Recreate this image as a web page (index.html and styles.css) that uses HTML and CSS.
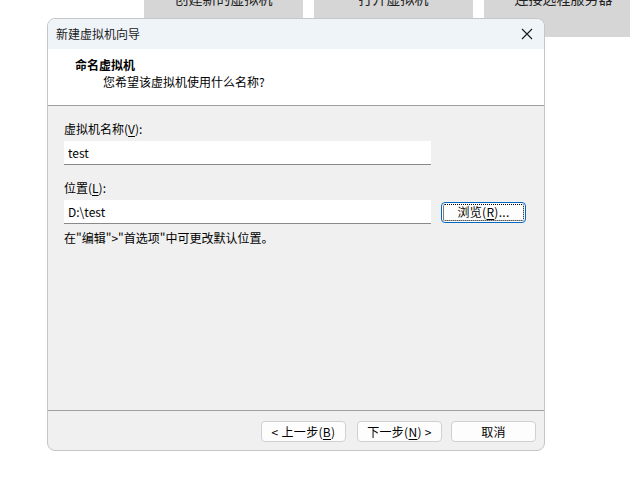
FILE: index.html
```html
<!DOCTYPE html>
<html lang="zh-CN">
<head>
<meta charset="utf-8">
<title>新建虚拟机向导</title>
<link rel="stylesheet" href="styles.css">
</head>
<body>
<div class="desktop">
  <div class="tiles">
    <div class="tile"><span>创建新的虚拟机</span></div>
    <div class="tile"><span>打开虚拟机</span></div>
    <div class="tile"><span>连接远程服务器</span></div>
  </div>

  <div class="dialog">
    <div class="titlebar">
      <span class="title">新建虚拟机向导</span>
      <svg class="close" width="12" height="12" viewBox="0 0 12 12"><path d="M1 1 L11 11 M11 1 L1 11" stroke="#1a1a1a" stroke-width="1.1" fill="none"/></svg>
    </div>
    <div class="header">
      <div class="h-title">命名虚拟机</div>
      <div class="h-sub">您希望该虚拟机使用什么名称?</div>
    </div>
    <div class="body">
      <div class="label">虚拟机名称(<u>V</u>):</div>
      <div class="row">
        <div class="input">test</div>
      </div>
      <div class="label second">位置(<u>L</u>):</div>
      <div class="row">
        <div class="input">D:\test</div>
        <div class="btn browse"><span class="focus">浏览(<u>R</u>)...</span></div>
      </div>
      <div class="note">在"编辑"&gt;"首选项"中可更改默认位置。</div>
    </div>
    <div class="footer">
      <div class="btn">&lt; 上一步(<u>B</u>)</div>
      <div class="btn">下一步(<u>N</u>) &gt;</div>
      <div class="btn cancel">取消</div>
    </div>
  </div>
</div>
</body>
</html>
```

FILE: styles.css
```css
* { box-sizing: border-box; }
html, body {
  margin: 0;
  padding: 0;
  background: #ffffff;
}
body {
  width: 630px;
  height: 482px;
  overflow: hidden;
  font-family: "Noto Sans CJK SC", "Noto Sans", sans-serif;
  font-size: 12px;
  color: #000;
}
.desktop {
  position: relative;
  width: 630px;
  height: 482px;
  overflow: hidden;
}
.tiles {
  display: flex;
  gap: 11px;
  padding-left: 144px;
}
.tile {
  flex: 0 0 159px;
  height: 37px;
  background: #d6d6d6;
  text-align: center;
  overflow: hidden;
  font-size: 14px;
  line-height: 16px;
  color: #222;
}
.tile span {
  display: block;
  margin-top: -10px;
}

.dialog {
  position: absolute;
  left: 47px;
  top: 18px;
  width: 498px;
  height: 433px;
  border: 1px solid #c6c6c6;
  border-radius: 8px;
  background: #f0f0f0;
  overflow: hidden;
  display: flex;
  flex-direction: column;
}
.titlebar {
  height: 30px;
  background: #eff4f9;
  display: flex;
  align-items: center;
  justify-content: space-between;
  padding: 0 10px 0 8px;
  line-height: 16px;
}
.title { color: #1a1a1a; }
.close { display: block; margin-right: 1px; }

.header {
  height: 57px;
  background: #fff;
  border-bottom: 1px solid #a0a0a0;
  padding: 8px 0 0 27px;
  line-height: 16px;
}
.h-title {
  font-weight: bold;
}
.h-sub {
  margin-top: 1px;
  padding-left: 28px;
}

.body {
  flex: 1;
  padding: 15px 0 0 16px;
  line-height: 16px;
}
.label { margin-bottom: 4px; }
.label.second { margin-top: 15px; }
.row {
  display: flex;
  align-items: center;
  gap: 10px;
}
.input {
  width: 367px;
  height: 24px;
  background: #fff;
  border-bottom: 1px solid #8a8a8a;
  padding: 3px 0 0 4px;
  line-height: 17px;
}
.note { margin-top: 6px; }

.btn {
  width: 85px;
  height: 21px;
  background: #fdfdfd;
  border: 1px solid #d0d0d0;
  border-radius: 4px;
  display: flex;
  align-items: center;
  justify-content: center;
  line-height: 14px;
  letter-spacing: 0.3px;
}
.browse {
  border-color: #0067c0;
  padding: 1px;
}
.browse .focus {
  width: 100%;
  height: 100%;
  border: 1px dotted #000;
  border-radius: 2px;
  display: flex;
  align-items: center;
  justify-content: center;
}

.footer {
  height: 40px;
  border-top: 1px solid #a0a0a0;
  display: flex;
  justify-content: flex-end;
  gap: 10px;
  padding: 10px 8px 0 0;
}
.footer .btn:first-child { margin-right: 1px; }
.footer .cancel { margin-left: -1px; }
u { text-underline-offset: 2px; }
```
